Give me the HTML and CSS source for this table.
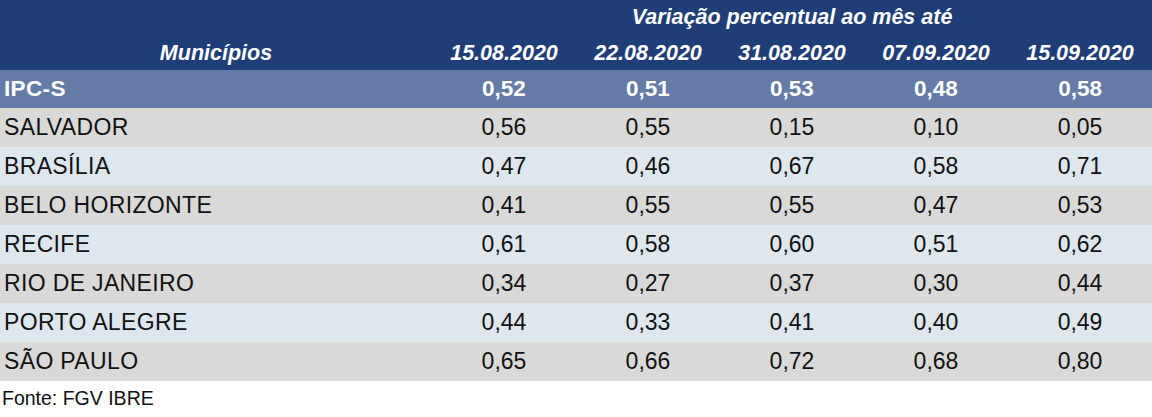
FILE: index.html
```html
<!DOCTYPE html>
<html lang="pt">
<head>
<meta charset="utf-8">
<link rel="stylesheet" href="styles.css">
<title>IPC-S Municípios</title>
</head>
<body>
<table class="ipc">
  <colgroup>
    <col class="c-name">
    <col class="c-val"><col class="c-val"><col class="c-val"><col class="c-val"><col class="c-val">
  </colgroup>
  <thead>
    <tr class="h1">
      <th></th>
      <th colspan="5">Variação percentual ao mês até</th>
    </tr>
    <tr class="h2">
      <th>Municípios</th>
      <th>15.08.2020</th>
      <th>22.08.2020</th>
      <th>31.08.2020</th>
      <th>07.09.2020</th>
      <th>15.09.2020</th>
    </tr>
  </thead>
  <tbody>
    <tr class="total"><td>IPC-S</td><td>0,52</td><td>0,51</td><td>0,53</td><td>0,48</td><td>0,58</td></tr>
    <tr class="grey"><td>SALVADOR</td><td>0,56</td><td>0,55</td><td>0,15</td><td>0,10</td><td>0,05</td></tr>
    <tr class="blue"><td>BRASÍLIA</td><td>0,47</td><td>0,46</td><td>0,67</td><td>0,58</td><td>0,71</td></tr>
    <tr class="grey"><td>BELO HORIZONTE</td><td>0,41</td><td>0,55</td><td>0,55</td><td>0,47</td><td>0,53</td></tr>
    <tr class="blue"><td>RECIFE</td><td>0,61</td><td>0,58</td><td>0,60</td><td>0,51</td><td>0,62</td></tr>
    <tr class="grey"><td>RIO DE JANEIRO</td><td>0,34</td><td>0,27</td><td>0,37</td><td>0,30</td><td>0,44</td></tr>
    <tr class="blue"><td>PORTO ALEGRE</td><td>0,44</td><td>0,33</td><td>0,41</td><td>0,40</td><td>0,49</td></tr>
    <tr class="grey"><td>SÃO PAULO</td><td>0,65</td><td>0,66</td><td>0,72</td><td>0,68</td><td>0,80</td></tr>
  </tbody>
</table>
<p class="source">Fonte: FGV IBRE</p>
</body>
</html>
```
FILE: styles.css
```css
html, body {
  margin: 0;
  padding: 0;
  background: #ffffff;
}
body {
  font-family: "Liberation Sans", Arial, sans-serif;
  color: #111111;
}
.ipc {
  width: 1152px;
  border-collapse: collapse;
  table-layout: fixed;
}
.c-name { width: 432px; }
.c-val { width: 144px; }
.ipc th, .ipc td {
  padding: 0;
  text-align: center;
  white-space: nowrap;
}
.ipc thead tr {
  background: #1f3e78;
  color: #ffffff;
  height: 35px;
}
.ipc th {
  font-size: 21.5px;
  font-weight: bold;
  font-style: italic;
}
.h1 th { vertical-align: bottom; padding-bottom: 5px; }
.h2 th { vertical-align: middle; padding-top: 1px; }
.ipc td {
  font-size: 23px;
  height: 39px;
}
.ipc td:first-child {
  text-align: left;
  padding-left: 4px;
  letter-spacing: 0.35px;
}
.total {
  background: #647ba5;
  color: #ffffff;
  font-weight: bold;
}
.total td { height: 38px; font-size: 22.5px; }
.grey { background: #d9d9d7; }
.blue { background: #dee6ee; }
.source {
  margin: 0;
  padding: 6px 0 0 2px;
  font-size: 19.5px;
  line-height: 22px;
  color: #111111;
}
```
